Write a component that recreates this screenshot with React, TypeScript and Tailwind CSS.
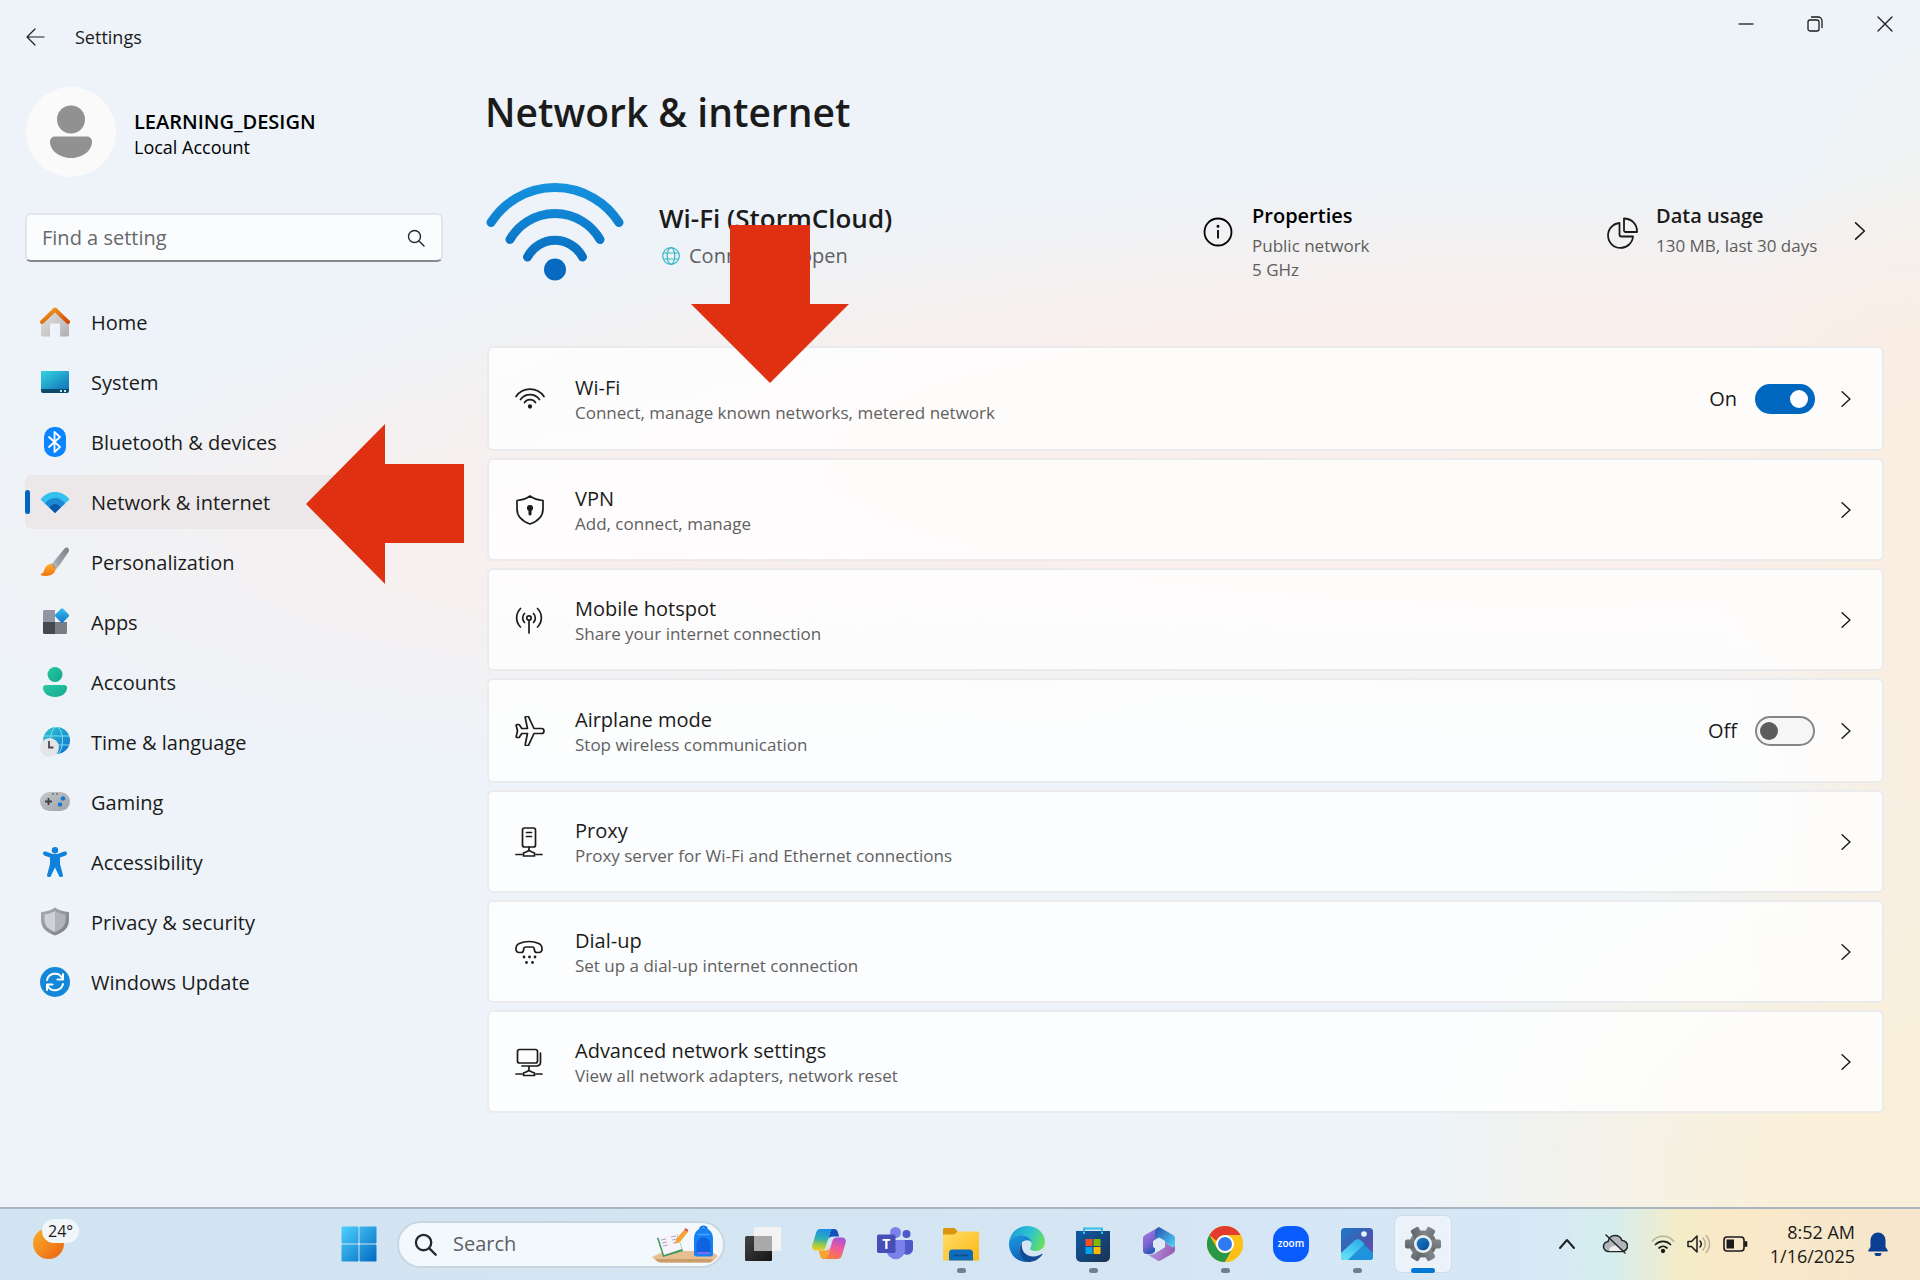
import React, { useState } from "react";

type NavItem = {
  title: string;
  icon: React.ReactNode;
};

type SettingCard = {
  title: string;
  description: string;
  icon: React.ReactNode;
  toggle?: boolean;
};

type TaskbarApp = {
  title: string;
  icon: React.ReactNode;
  running?: boolean;
  active?: boolean;
};

/* ---------- Sidebar icons ---------- */

const HomeIcon = () => (
  <svg width="30" height="30" viewBox="0 0 30 30">
    <defs>
      <linearGradient id="homeWall" x1="0" y1="0" x2="1" y2="1">
        <stop offset="0" stopColor="#e6e6e6" />
        <stop offset="1" stopColor="#b0b0b2" />
      </linearGradient>
      <linearGradient id="homeRoof" x1="0" y1="0" x2="1" y2="1">
        <stop offset="0" stopColor="#f5a01d" />
        <stop offset="1" stopColor="#d04a08" />
      </linearGradient>
    </defs>
    <path d="M1 14 15 2l14 12v14a1.500 1.500 0 0 1-1.500 1.500H20V16.500h-10v13H2.500A1.500 1.500 0 0 1 1 28z" fill="url(#homeWall)" />
    <path d="M2 15 15 2.500 28 15" fill="none" stroke="url(#homeRoof)" strokeWidth="4" strokeLinecap="round" strokeLinejoin="round" />
  </svg>
);

const SystemIcon = () => (
  <svg width="30" height="30" viewBox="0 0 30 30">
    <defs>
      <linearGradient id="sysScreen" x1="0" y1="0" x2="1" y2="1">
        <stop offset="0" stopColor="#34d5e2" />
        <stop offset="1" stopColor="#1173b8" />
      </linearGradient>
    </defs>
    <rect x="1" y="4" width="28" height="22" rx="2" fill="#0c4a6a" />
    <path d="M3 4h24a2 2 0 0 1 2 2v16H1V6a2 2 0 0 1 2-2z" fill="url(#sysScreen)" />
    <rect x="20" y="23" width="2" height="2" fill="#bfe6f5" />
    <rect x="24" y="23" width="2" height="2" fill="#bfe6f5" />
  </svg>
);

const BluetoothIcon = () => (
  <svg width="30" height="30" viewBox="0 0 30 30">
    <rect x="4" y="0" width="22" height="30" rx="10" fill="#0a84ff" />
    <path d="m9 10 11 10-5.500 5V5l5.500 5L9 20" fill="none" stroke="#fff" strokeWidth="1.800" strokeLinejoin="round" strokeLinecap="round" />
  </svg>
);

const NetworkIcon = () => (
  <svg width="30" height="30" viewBox="0 0 30 30">
    <path d="M.500 12.500C4 7.500 9.500 5 15 5s11 2.500 14.500 7.500L15 26z" fill="#35c1ef" />
    <path d="M5 16.500C7.500 13 11 11 15 11s7.500 2 10 5.500L15 26z" fill="#1a8ad6" />
    <path d="M9.500 20.500C11 18.500 12.800 17 15 17s4 1.500 5.500 3.500L15 26z" fill="#0b57a6" />
  </svg>
);

const PersonalizationIcon = () => (
  <svg width="30" height="30" viewBox="0 0 30 30">
    <defs>
      <linearGradient id="brushHandle" x1="1" y1="0" x2="0" y2="1">
        <stop offset="0" stopColor="#7c8187" />
        <stop offset="1" stopColor="#a9b0b6" />
      </linearGradient>
      <linearGradient id="brushTip" x1="0" y1="0" x2="0" y2="1">
        <stop offset="0" stopColor="#ffb03a" />
        <stop offset="1" stopColor="#f07407" />
      </linearGradient>
    </defs>
    <path d="M24.500 1.500c3-2.500 5.500 0 4 3.500L18.500 19.500l-5-4.500z" fill="url(#brushHandle)" />
    <path d="M8.500 17.500c3-2 7 .500 7 4.500 0 5-6 8-14 6.500-1.500-.500-.500-1.800.800-2.200C4.500 25 4 19.500 8.500 17.500z" fill="url(#brushTip)" />
    <path d="m11.500 17 2-2 5 4.500-2.800 3z" fill="#6f757b" opacity=".5" />
  </svg>
);

const AppsIcon = () => (
  <svg width="30" height="30" viewBox="0 0 30 30">
    <defs>
      <linearGradient id="appDiamond" x1="0" y1="0" x2="1" y2="1">
        <stop offset="0" stopColor="#35c3f3" />
        <stop offset="1" stopColor="#1273c9" />
      </linearGradient>
    </defs>
    <path d="M4.500 3H15v12H3V4.500A1.500 1.500 0 0 1 4.500 3z" fill="#9095a1" />
    <path d="M3 15h12v12H4.500A1.500 1.500 0 0 1 3 25.500z" fill="#45494e" />
    <path d="M15 15h12v10.500a1.500 1.500 0 0 1-1.500 1.500H15z" fill="#797e83" />
    <rect x="16.500" y="3" width="11" height="11" rx="1.500" transform="rotate(45 22 8.500)" fill="url(#appDiamond)" />
  </svg>
);

const AccountsIcon = () => (
  <svg width="30" height="30" viewBox="0 0 30 30">
    <defs>
      <linearGradient id="accountFill" x1="0" y1="0" x2="1" y2="1">
        <stop offset="0" stopColor="#26c9a4" />
        <stop offset="1" stopColor="#14a78c" />
      </linearGradient>
    </defs>
    <circle cx="15" cy="7.500" r="7.500" fill="url(#accountFill)" />
    <path d="M6 18h18a3 3 0 0 1 3 3c0 5-5.500 9-12 9S3 26 3 21a3 3 0 0 1 3-3z" fill="url(#accountFill)" />
  </svg>
);

const TimeIcon = () => (
  <svg width="30" height="30" viewBox="0 0 30 30">
    <defs>
      <linearGradient id="globeFill" x1="0" y1="0" x2="1" y2="1">
        <stop offset="0" stopColor="#2ec8d0" />
        <stop offset="1" stopColor="#0f6fd0" />
      </linearGradient>
    </defs>
    <circle cx="16.500" cy="13.500" r="13.500" fill="url(#globeFill)" />
    <g fill="none" stroke="#7fdcf0" strokeWidth="1">
      <ellipse cx="16.500" cy="13.500" rx="6" ry="13.500" />
      <path d="M4 9h25M4 18h25" />
    </g>
    <circle cx="9.500" cy="20.500" r="9.500" fill="#e4e5e8" />
    <path d="M9 14v6.500h4.500" fill="none" stroke="#4b4b4b" strokeWidth="1.800" />
  </svg>
);

const GamingIcon = () => (
  <svg width="30" height="30" viewBox="0 0 30 30">
    <defs>
      <linearGradient id="padFill" x1="0" y1="0" x2="1" y2="1">
        <stop offset="0" stopColor="#c3c6ca" />
        <stop offset="1" stopColor="#a0a4a9" />
      </linearGradient>
    </defs>
    <rect x="0" y="5" width="30" height="19" rx="9.500" fill="url(#padFill)" />
    <path d="M8.500 11v7M5 14.500h7" stroke="#3c3f43" strokeWidth="1.800" />
    <circle cx="23" cy="11.500" r="2.300" fill="#1b78cf" />
    <circle cx="20" cy="17.500" r="2.300" fill="#1b78cf" />
    <circle cx="13" cy="7" r=".8" fill="#3c3f43" />
    <circle cx="17" cy="7" r=".8" fill="#3c3f43" />
  </svg>
);

const AccessibilityIcon = () => (
  <svg width="30" height="30" viewBox="0 0 30 30">
    <circle cx="15" cy="3.200" r="3.200" fill="#0f83dc" />
    <path d="M5 6.500 12 9h6l7-2.500" fill="none" stroke="#0f83dc" strokeWidth="4" strokeLinecap="round" strokeLinejoin="round" />
    <path d="M10 8h10v9l2.800 10.500a2 2 0 0 1-3.800 1.300L15 20.500l-4 8.300a2 2 0 0 1-3.800-1.300L10 17z" fill="#0f83dc" />
  </svg>
);

const PrivacyIcon = () => (
  <svg width="30" height="30" viewBox="0 0 30 30">
    <defs>
      <linearGradient id="shieldEdge" x1="0" y1="0" x2="1" y2="1">
        <stop offset="0" stopColor="#a9acb0" />
        <stop offset="1" stopColor="#7b7e83" />
      </linearGradient>
    </defs>
    <path d="M15 .500C18.500 3 23 4.500 29 5v8c0 7.500-5 12.500-14 15.500C6 25.500 1 20.500 1 13V5c6-.500 10.500-2 14-4.500z" fill="url(#shieldEdge)" />
    <path d="M15 4c-3 2-6.500 3-10.500 3.500V13c0 5.500 3.500 9.500 10.500 12z" fill="#ced1d5" />
    <path d="M15 4c3 2 6.500 3 10.500 3.500V13c0 5.500-3.500 9.500-10.500 12z" fill="#b1b4b9" />
  </svg>
);

const UpdateIcon = () => (
  <svg width="30" height="30" viewBox="0 0 30 30">
    <circle cx="15" cy="15" r="15" fill="#1488d8" />
    <g fill="none" stroke="#fff" strokeWidth="2" strokeLinecap="round" strokeLinejoin="round">
      <path d="M7 13a8.300 8.300 0 0 1 15-2.500l1 1.500M23 7v5.500h-5.500" />
      <path d="M23 17a8.300 8.300 0 0 1-15 2.500L7 18M7 23v-5.500h5.500" />
    </g>
  </svg>
);

/* ---------- Card icons ---------- */

const lineProps = {
  width: 30,
  height: 30,
  viewBox: "0 0 30 30",
  fill: "none",
  stroke: "#1b1b1b",
  strokeWidth: 1.7,
  strokeLinecap: "round" as const,
  strokeLinejoin: "round" as const,
};

const WifiIcon = () => (
  <svg {...lineProps}>
    <path d="M1 12.500a17 17 0 0 1 28 0" />
    <path d="M5.500 15.500a11.700 11.700 0 0 1 19 0" />
    <path d="M9.500 18.500a6.800 6.800 0 0 1 11 0" />
    <circle cx="15" cy="22.500" r="1.300" fill="#1b1b1b" />
  </svg>
);

const VpnIcon = () => (
  <svg {...lineProps}>
    <path d="M15 1c3.500 2.500 7.500 4 13 4.500V14c0 7.500-4.500 12-13 15C6.500 26 2 21.500 2 14V5.500C7.500 5 11.500 3.500 15 1z" />
    <circle cx="15" cy="13" r="2.200" fill="#1b1b1b" />
    <path d="M15 14v5" strokeWidth="3" />
  </svg>
);

const HotspotIcon = () => (
  <svg {...lineProps}>
    <circle cx="14" cy="13" r="2.200" />
    <path d="M14 15.500V28" />
    <path d="M9.500 17.500a6.500 6.500 0 0 1 0-9M18.500 8.500a6.500 6.500 0 0 1 0 9" />
    <path d="M5.500 22a13 13 0 0 1 0-18.500M22.500 3.500a13 13 0 0 1 0 18.500" />
  </svg>
);

const AirplaneIcon = () => (
  <svg {...lineProps}>
    <path d="M26.500 12.500a2.500 2.500 0 0 1 0 5H19l-5.200 11.200a1 1 0 0 1-1 .800H11a.800.800 0 0 1-.800-1L12.500 17.500H6.800L4.500 21a1 1 0 0 1-.8.500H2a.800.800 0 0 1-.8-1L2.500 15 1.200 9.500a.800.800 0 0 1 .8-1h1.700a1 1 0 0 1 .8.500l2.300 3.500h5.700L10.200 1.500a.800.800 0 0 1 .8-1h1.800a1 1 0 0 1 1 .8L19 12.500z" />
  </svg>
);

const ProxyIcon = () => (
  <svg {...lineProps}>
    <rect x="7.500" y="1" width="13" height="19" rx="2" />
    <path d="M11.500 5.500h5M11.500 9.500h5M14 20v3.500M1 27.500h6M21 27.500h6" />
    <path d="M11 25l3-1.500 3 1.500 2.500 1v3h-11v-3z" />
  </svg>
);

const DialupIcon = () => (
  <svg {...lineProps}>
    <path d="M1 11c0-4 6-6.500 13-6.500S27 7 27 11v1.500a3 3 0 0 1-3 3h-2a2.500 2.500 0 0 1-2.500-2.200l-.3-1.800a2 2 0 0 0-2-1.500h-6.400a2 2 0 0 0-2 1.500l-.3 1.800A2.500 2.500 0 0 1 6 15.500H4a3 3 0 0 1-3-3z" />
    <g fill="#1b1b1b" stroke="none">
      <circle cx="9" cy="20" r="1.400" />
      <circle cx="14.500" cy="20" r="1.400" />
      <circle cx="20" cy="20" r="1.400" />
      <circle cx="11.500" cy="25.500" r="1.400" />
      <circle cx="17.500" cy="25.500" r="1.400" />
    </g>
  </svg>
);

const AdvancedIcon = () => (
  <svg {...lineProps}>
    <rect x="2.500" y="2.500" width="20" height="13.500" rx="2" />
    <path d="M25.500 6v9.500a3.500 3.500 0 0 1-3.500 3.500H7M14 19v4.500M1 27h6M21 27h6" />
    <path d="M11 25l3-1.500 3 1.500 2.500 1v2.500h-11V26z" />
  </svg>
);

const Chevron = ({ size = 16 }: { size?: number }) => (
  <svg width={size} height={size} viewBox="0 0 16 16" fill="none" stroke="#1b1b1b" strokeWidth="1.300" strokeLinecap="round" strokeLinejoin="round">
    <path d="M4.500 1.500 11.500 8l-7 6.500" />
  </svg>
);

const SearchIcon = ({ size = 18, stroke = 1.4 }: { size?: number; stroke?: number }) => (
  <svg width={size} height={size} viewBox="0 0 18 18" fill="none" stroke="#23282c" strokeWidth={stroke} strokeLinecap="round">
    <circle cx="7.500" cy="7.500" r="6" />
    <path d="m12 12 5 5" />
  </svg>
);

/* ---------- Taskbar icons ---------- */

const StartIcon = () => (
  <svg width="36" height="36" viewBox="0 0 36 36">
    <defs>
      <linearGradient id="startFill" gradientUnits="userSpaceOnUse" x1="0" y1="0" x2="36" y2="36">
        <stop offset="0" stopColor="#4fd3fb" />
        <stop offset="1" stopColor="#0167c4" />
      </linearGradient>
    </defs>
    <g fill="url(#startFill)">
      <rect x=".5" y=".5" width="17" height="17" rx="1" />
      <rect x="18.500" y=".5" width="17" height="17" rx="1" />
      <rect x=".5" y="18.500" width="17" height="17" rx="1" />
      <rect x="18.500" y="18.500" width="17" height="17" rx="1" />
    </g>
  </svg>
);

const TaskViewIcon = () => (
  <svg width="36" height="36" viewBox="0 0 36 36">
    <defs>
      <linearGradient id="tvDark" x1="0" y1="0" x2="1" y2="1">
        <stop offset="0" stopColor="#454545" />
        <stop offset="1" stopColor="#141414" />
      </linearGradient>
    </defs>
    <rect x="9" y="1" width="27" height="24" rx="1.500" fill="#f3f3f3" />
    <rect x="0" y="10" width="27" height="25" rx="1.500" fill="url(#tvDark)" />
    <rect x="9" y="10" width="18" height="15" fill="#a9a9a9" />
  </svg>
);

const CopilotIcon = () => (
  <svg width="36" height="36" viewBox="0 0 36 36">
    <defs>
      <linearGradient id="copLeft" x1=".3" y1="0" x2=".2" y2="1">
        <stop offset="0" stopColor="#1a8fe6" />
        <stop offset=".45" stopColor="#2fb0b0" />
        <stop offset=".75" stopColor="#a8cc3a" />
        <stop offset="1" stopColor="#f7c928" />
      </linearGradient>
      <linearGradient id="copRight" x1=".7" y1="0" x2=".4" y2="1">
        <stop offset="0" stopColor="#a553d8" />
        <stop offset=".5" stopColor="#ef5a9a" />
        <stop offset="1" stopColor="#fb7a3c" />
      </linearGradient>
    </defs>
    <path d="M20 3h3.500c1.600 0 2.600 1 3.100 2.500l1.600 5H22c-3 0-4.500 1.500-5.300 4z" fill="#1650c0" />
    <path d="M16 33h-3.500c-1.600 0-2.600-1-3.100-2.500l-1.800-6H14c3 0 4.500-1.500 5.300-4z" fill="#f8a12c" />
    <path d="M9.500 3H22c-1.800.500-2.600 2-3.200 4l-4 13.500c-.8 2.700-2 4-4.800 4H5c-3 0-4.500-2.500-3.600-5.500l3.600-12C5.800 4.500 7.200 3 9.500 3z" fill="url(#copLeft)" />
    <path d="M26.500 33H14c1.800-.500 2.600-2 3.200-4l4-13.500c.8-2.700 2-4 4.800-4h5c3 0 4.500 2.500 3.600 5.500l-3.600 12c-.8 2.500-2.200 4-4.500 4z" fill="url(#copRight)" />
  </svg>
);

const TeamsIcon = () => (
  <svg width="36" height="36" viewBox="0 0 36 36">
    <circle cx="29.500" cy="8" r="4" fill="#5059c9" />
    <path d="M25 14h9.500a1.500 1.500 0 0 1 1.500 1.500V23a6 6 0 0 1-11 3z" fill="#5059c9" />
    <circle cx="18.500" cy="6.500" r="5.500" fill="#7b83eb" />
    <path d="M11 14h15.500a1.500 1.500 0 0 1 1.500 1.500V24a9.200 9.200 0 0 1-18.400 0z" fill="#7b83eb" />
    <rect x="0" y="8.500" width="18.500" height="18.500" rx="1.700" fill="#464eb8" />
    <text x="9.200" y="23" textAnchor="middle" fontSize="14" fontWeight="700" fill="#fff" fontFamily="Open Sans, sans-serif">T</text>
  </svg>
);

const ExplorerIcon = () => (
  <svg width="36" height="36" viewBox="0 0 36 36">
    <defs>
      <linearGradient id="folderFill" x1="0" y1="0" x2="1" y2="1">
        <stop offset="0" stopColor="#ffdc6a" />
        <stop offset="1" stopColor="#fdb913" />
      </linearGradient>
    </defs>
    <path d="M1.500 2H10c1.500 0 2 .500 3 1.500L14.500 5v6H0V3.500A1.500 1.500 0 0 1 1.500 2z" fill="#d9960a" />
    <path d="M0 8.500h10c1.500 0 2-.500 3-1.500l1.500-1.500h20A1.500 1.500 0 0 1 36 7v27.500H0z" fill="url(#folderFill)" />
    <path d="M6 34.500V27a3.500 3.500 0 0 1 3.500-3.500h17A3.500 3.500 0 0 1 30 27v7.500z" fill="#0f6cbd" />
    <path d="M11.500 29.500h13" stroke="#0b4a8a" strokeWidth="1.600" strokeLinecap="round" />
  </svg>
);

const EdgeIcon = () => (
  <svg width="36" height="36" viewBox="0 0 36 36">
    <defs>
      <linearGradient id="edgeTop" x1="0" y1=".3" x2="1" y2=".6">
        <stop offset="0" stopColor="#1e9fd8" />
        <stop offset=".55" stopColor="#2cc4cf" />
        <stop offset="1" stopColor="#6be05a" />
      </linearGradient>
      <linearGradient id="edgeLeft" x1="0" y1="0" x2=".4" y2="1">
        <stop offset="0" stopColor="#1c9de0" />
        <stop offset="1" stopColor="#0f60b8" />
      </linearGradient>
    </defs>
    <path d="M0 17C1 7 8.500 0 18 0c10.500 0 18 7.500 18 16 0 5.500-4 9-9 9-3.500 0-6-1.200-6-2.500 0-1 1.500-1.800 1.500-4.500 0-4.500-4-9-10.500-9C6 9 1.500 12.500 0 17z" fill="url(#edgeTop)" />
    <path d="M0 18C0 12.500 5.500 9 12 9c6 0 10 3.800 10.500 7.500-1-1.500-2.600-2.300-4.500-2.300-4.500 0-7.500 4-7.500 8.600 0 6 4.200 11 9.500 13C8.500 37 0 28.500 0 18z" fill="url(#edgeLeft)" />
    <path d="M13 16.500c-1.600 8.500 4 14 11.500 14 4 0 6.500-1.500 8.300-2.700.500-.300 1 .200.600.700C30 33.500 24.500 36 19.500 36c-6-1.500-9-7.500-9-12.500 0-3 1-5.500 2.500-7z" fill="#134c95" />
  </svg>
);

const StoreIcon = () => (
  <svg width="36" height="36" viewBox="0 0 36 36">
    <defs>
      <linearGradient id="storeFill" x1="0" y1="0" x2="1" y2="1">
        <stop offset="0" stopColor="#0c5aa6" />
        <stop offset="1" stopColor="#1c3252" />
      </linearGradient>
    </defs>
    <path d="M9 10V2.500h18V10" fill="none" stroke="#35bfe6" strokeWidth="2" />
    <path d="M1 5h34v26a5 5 0 0 1-5 5H6a5 5 0 0 1-5-5z" fill="url(#storeFill)" />
    <path d="M9 8V5.500M27 8V5.500" stroke="#35bfe6" strokeWidth="2" />
    <rect x="10.500" y="13" width="7" height="7" fill="#f25022" />
    <rect x="18.500" y="13" width="7" height="7" fill="#7fba00" />
    <rect x="10.500" y="21" width="7" height="7" fill="#00a4ef" />
    <rect x="18.500" y="21" width="7" height="7" fill="#ffb900" />
  </svg>
);

const OfficeIcon = () => (
  <svg width="36" height="36" viewBox="0 0 36 36">
    <defs>
      <linearGradient id="offLeft" x1="0" y1="0" x2=".5" y2="1">
        <stop offset="0" stopColor="#a883ea" />
        <stop offset=".6" stopColor="#7f63cf" />
        <stop offset="1" stopColor="#1f57b8" />
      </linearGradient>
      <linearGradient id="offRight" x1="0" y1="0" x2="1" y2="1">
        <stop offset="0" stopColor="#2450a8" />
        <stop offset=".6" stopColor="#3f9fe0" />
        <stop offset="1" stopColor="#55d3f5" />
      </linearGradient>
      <linearGradient id="offBottom" x1="0" y1="0" x2="1" y2=".2">
        <stop offset="0" stopColor="#b8a0ea" />
        <stop offset="1" stopColor="#9a5fb4" />
      </linearGradient>
    </defs>
    <path d="M18 1 4 9c-1.500 1-2 2-2 3.500v12c0 2.500 1.500 3.500 4 3.500 4.500 0 7.500-.500 8-3.500V9z" fill="url(#offLeft)" />
    <path d="M18 1c-2.500 1.300-4 3-4 6v8.500l4-2.500 6 3.500 6 4c2 1.200 4 .5 4-1.500v-6.500c0-1.500-.6-2.600-2-3.500z" fill="url(#offRight)" />
    <path d="M34 19c0 2-2 2.800-4 1.500l-6-4V21l-10 6.500c-2 1.200-5 1.500-8.500.5L16 34.300c1.300.8 2.700.8 4 0l12-7c1.300-.8 2-2 2-3.500z" fill="url(#offBottom)" />
    <path d="m18 12 5.500 3v6L18 24l-5.500-3v-6z" fill="#dcebf6" stroke="#dcebf6" strokeWidth="1" strokeLinejoin="round" />
  </svg>
);

const ChromeIcon = () => (
  <svg width="36" height="36" viewBox="0 0 36 36">
    <circle cx="18" cy="18" r="18" fill="#fbc116" />
    <path d="M2.400 9A18 18 0 0 1 33.600 9H18a9 9 0 0 0-8.500 6z" fill="#e33b2e" />
    <path d="M2.400 9a18 18 0 0 0 15.600 27l7.800-13.500a9 9 0 0 1-15.600 0z" fill="#289847" />
    <path d="M33.600 9H18a9 9 0 0 1 7.800 13.500L18 36A18 18 0 0 0 33.600 9z" fill="#fbc116" />
    <circle cx="18" cy="18" r="9" fill="#fff" />
    <circle cx="18" cy="18" r="7" fill="#3079ee" />
  </svg>
);

const ZoomIcon = () => (
  <svg width="36" height="36" viewBox="0 0 36 36">
    <rect width="36" height="36" rx="14" fill="#0b5cff" />
    <text x="18" y="21" textAnchor="middle" fontSize="10" fontWeight="600" fill="#fff" fontFamily="Open Sans, sans-serif">zoom</text>
  </svg>
);

const PhotosIcon = () => (
  <svg width="36" height="36" viewBox="0 0 36 36">
    <defs>
      <linearGradient id="photoBg" x1="0" y1="0" x2="1" y2="1">
        <stop offset="0" stopColor="#1a7bc8" />
        <stop offset=".6" stopColor="#4a55ad" />
        <stop offset="1" stopColor="#6f4bb0" />
      </linearGradient>
      <linearGradient id="photoHill" x1="0" y1="1" x2=".6" y2="0">
        <stop offset="0" stopColor="#6be6f7" />
        <stop offset="1" stopColor="#2eb2ea" />
      </linearGradient>
      <clipPath id="photoClip">
        <rect x="2" y="2" width="32" height="32" rx="3.500" />
      </clipPath>
    </defs>
    <g clipPath="url(#photoClip)">
      <rect x="2" y="2" width="32" height="32" fill="url(#photoBg)" />
      <path d="M16 14.500c1.500-1.300 3.500-1.300 5 0L34 27v7H8z" fill="#1f93dc" />
      <path d="M15.500 14.500c2-1.800 4.500-1.800 6.500 0l3.500 3.300L9 34H2v-7z" fill="url(#photoHill)" />
    </g>
    <circle cx="25" cy="8" r="2.800" fill="#e8f2fb" />
  </svg>
);

const SettingsIcon = () => (
  <svg width="36" height="36" viewBox="0 0 36 36">
    <defs>
      <linearGradient id="gearFill" x1="0" y1="0" x2="1" y2="1">
        <stop offset="0" stopColor="#868b90" />
        <stop offset="1" stopColor="#5f6468" />
      </linearGradient>
      <linearGradient id="gearHole" x1="0" y1="0" x2="1" y2="1">
        <stop offset="0" stopColor="#1a7fd0" />
        <stop offset="1" stopColor="#0b4a8f" />
      </linearGradient>
    </defs>
    <g fill="url(#gearFill)">
      <circle cx="18" cy="18" r="13.500" />
      <rect x="13.500" y="0" width="9" height="36" rx="2" transform="rotate(30 18 18)" />
      <rect x="13.500" y="0" width="9" height="36" rx="2" transform="rotate(90 18 18)" />
      <rect x="13.500" y="0" width="9" height="36" rx="2" transform="rotate(150 18 18)" />
    </g>
    <circle cx="18" cy="18" r="9" fill="#e9eef3" />
    <circle cx="18" cy="18" r="6.300" fill="url(#gearHole)" />
  </svg>
);

/* ---------- Data ---------- */

const NAV_ITEMS: NavItem[] = [
  { title: "Home", icon: <HomeIcon /> },
  { title: "System", icon: <SystemIcon /> },
  { title: "Bluetooth & devices", icon: <BluetoothIcon /> },
  { title: "Network & internet", icon: <NetworkIcon /> },
  { title: "Personalization", icon: <PersonalizationIcon /> },
  { title: "Apps", icon: <AppsIcon /> },
  { title: "Accounts", icon: <AccountsIcon /> },
  { title: "Time & language", icon: <TimeIcon /> },
  { title: "Gaming", icon: <GamingIcon /> },
  { title: "Accessibility", icon: <AccessibilityIcon /> },
  { title: "Privacy & security", icon: <PrivacyIcon /> },
  { title: "Windows Update", icon: <UpdateIcon /> },
];

const CARDS: SettingCard[] = [
  { title: "Wi-Fi", description: "Connect, manage known networks, metered network", icon: <WifiIcon />, toggle: true },
  { title: "VPN", description: "Add, connect, manage", icon: <VpnIcon /> },
  { title: "Mobile hotspot", description: "Share your internet connection", icon: <HotspotIcon /> },
  { title: "Airplane mode", description: "Stop wireless communication", icon: <AirplaneIcon />, toggle: false },
  { title: "Proxy", description: "Proxy server for Wi-Fi and Ethernet connections", icon: <ProxyIcon /> },
  { title: "Dial-up", description: "Set up a dial-up internet connection", icon: <DialupIcon /> },
  { title: "Advanced network settings", description: "View all network adapters, network reset", icon: <AdvancedIcon /> },
];

const APPS: TaskbarApp[] = [
  { title: "Task View", icon: <TaskViewIcon /> },
  { title: "Copilot", icon: <CopilotIcon /> },
  { title: "Teams", icon: <TeamsIcon /> },
  { title: "File Explorer", icon: <ExplorerIcon />, running: true },
  { title: "Edge", icon: <EdgeIcon /> },
  { title: "Store", icon: <StoreIcon />, running: true },
  { title: "Microsoft 365", icon: <OfficeIcon /> },
  { title: "Chrome", icon: <ChromeIcon />, running: true },
  { title: "Zoom", icon: <ZoomIcon /> },
  { title: "Photos", icon: <PhotosIcon />, running: true },
  { title: "Settings", icon: <SettingsIcon />, active: true },
];

/* ---------- Sections ---------- */

const TitleBar = () => (
  <header className="flex h-[74px] items-start justify-between">
    <div className="flex h-full items-center gap-[30px] pl-[26px]">
      <button aria-label="Back">
        <svg width="19" height="18" viewBox="0 0 19 18" fill="none" stroke="#1b1f24" strokeWidth="1.200" strokeLinecap="round" strokeLinejoin="round">
          <path d="M9 1 1 9l8 8M1 9h17" />
        </svg>
      </button>
      <span className="text-lg leading-6">Settings</span>
    </div>
    <div className="flex h-[47px] items-center">
      <button aria-label="Minimize" className="flex w-[69px] justify-center">
        <svg width="16" height="16" viewBox="0 0 16 16" stroke="#1b1b1b" strokeWidth="1.300">
          <path d="M.5 8h15" />
        </svg>
      </button>
      <button aria-label="Restore" className="flex w-[69px] justify-center">
        <svg width="16" height="16" viewBox="0 0 16 16" fill="none" stroke="#1b1b1b" strokeWidth="1.300" strokeLinecap="round">
          <rect x="1" y="4" width="11" height="11" rx="2" />
          <path d="M4.500 1H11a4 4 0 0 1 4 4v6.500" />
        </svg>
      </button>
      <button aria-label="Close" className="flex w-[71px] justify-center">
        <svg width="16" height="16" viewBox="0 0 16 16" stroke="#1b1b1b" strokeWidth="1.300" strokeLinecap="round">
          <path d="m1 1 14 14M15 1 1 15" />
        </svg>
      </button>
    </div>
  </header>
);

const Sidebar = () => (
  <aside className="w-[443px] shrink-0 pt-[13px] pl-[25px]">
    <div className="flex items-center gap-[18px] pl-px">
      <div className="size-[90px] rounded-full bg-[#fafafa]">
        <svg width="90" height="90" viewBox="0 0 90 90" fill="#919191">
          <circle cx="45" cy="32.500" r="14" />
          <path d="M29 49.500h32a5 5 0 0 1 5 5C66 64 56 71 45 71s-21-7-21-16.500a5 5 0 0 1 5-5z" />
        </svg>
      </div>
      <div className="pt-1 text-black">
        <div className="text-xl leading-[26px] font-semibold">LEARNING_DESIGN</div>
        <div className="text-lg leading-6">Local Account</div>
      </div>
    </div>

    <label className="mt-9 flex h-[49px] items-center rounded-md border-2 border-[#e2e5ea] border-b-[#85888c] bg-[#fbfcfe] pr-4 pl-[15px]">
      <input
        type="text"
        aria-label="Find a setting"
        placeholder="Find a setting"
        className="min-w-0 flex-1 bg-transparent text-xl outline-none placeholder:text-[#66686b]"
      />
      <SearchIcon />
    </label>

    <nav className="mt-[33px]">
      <ul className="flex flex-col gap-1.5">
        {NAV_ITEMS.map((item) => {
          const selected = item.title === "Network & internet";
          return (
            <li key={item.title} className="relative">
              <a
                href="#"
                className={`flex h-[54px] items-center rounded-md ${selected ? "bg-[#ece8ea]" : ""}`}
              >
                <span className={`h-6 w-[5px] rounded-full ${selected ? "bg-[#0067c0]" : ""}`} />
                <span className="ml-[10px]">{item.icon}</span>
                <span className="ml-[21px] pt-0.5 text-xl leading-7">{item.title}</span>
              </a>
              {selected && (
                <svg className="absolute -top-[51px] left-[281px]" width="158" height="160" viewBox="0 0 158 160">
                  <path d="M0 80 79 0v40h79v79H79v41z" fill="#e03012" />
                </svg>
              )}
            </li>
          );
        })}
      </ul>
    </nav>
  </aside>
);

const ConnectionSummary = () => (
  <section className="relative mt-9 flex h-28 items-start">
    <svg className="mt-[6px] -ml-px shrink-0" width="138" height="99" viewBox="0 0 138 99" fill="none">
      <defs>
        <linearGradient id="wifiFill" gradientUnits="userSpaceOnUse" x1="0" y1="0" x2="0" y2="99">
          <stop offset="0" stopColor="#1593e0" />
          <stop offset="1" stopColor="#0764b8" />
        </linearGradient>
      </defs>
      <g stroke="url(#wifiFill)" strokeWidth="9" strokeLinecap="round">
        <path d="M5 40.500a76 76 0 0 1 128 0" />
        <path d="M24 57.500a52 52 0 0 1 90 0" />
        <path d="M41.500 75a31 31 0 0 1 55 0" />
      </g>
      <circle cx="69" cy="87.500" r="11" fill="#076ac0" />
    </svg>
    <div className="ml-[35px] pt-[26px]">
      <h2 className="text-[26px] leading-8 font-semibold">Wi-Fi (StormCloud)</h2>
      <div className="mt-2 flex items-center gap-[9px] pl-[3px] text-xl leading-7 text-[#5d6064]">
        <svg width="18" height="18" viewBox="0 0 18 18" fill="none" stroke="#35b6c9" strokeWidth="1.200">
          <circle cx="9" cy="9" r="8.300" />
          <ellipse cx="9" cy="9" rx="3.800" ry="8.300" />
          <path d="M1.500 6h15M1.500 12h15" />
        </svg>
        <span>Connected, open</span>
      </div>
    </div>
    <div className="ml-auto flex w-[404px] shrink-0 pt-7">
      <svg className="mt-[13px]" width="30" height="30" viewBox="0 0 30 30" fill="none" stroke="#000" strokeWidth="1.800">
        <circle cx="15" cy="15" r="13.500" />
        <path d="M15 13v8.500" />
        <circle cx="15" cy="9.200" r=".6" />
      </svg>
      <div className="ml-[19px]">
        <h3 className="mb-1.5 text-xl leading-6 font-semibold text-black">Properties</h3>
        <p className="text-[17px] leading-6 text-[#5d5d5d]">Public network</p>
        <p className="text-[17px] leading-6 text-[#5d5d5d]">5 GHz</p>
      </div>
    </div>
    <a href="#" className="flex w-[277px] shrink-0 pt-7">
      <svg className="mt-[13px]" width="32" height="32" viewBox="0 0 32 32" fill="none" stroke="#1b1b1b" strokeWidth="1.800" strokeLinejoin="round">
        <path d="M12.500 6A12.500 12.500 0 1 0 26 19.500H14.500a2 2 0 0 1-2-2z" />
        <path d="M17 1.500v12a1.500 1.500 0 0 0 1.500 1.500H30C30.500 7.500 24.500 1.500 17 1.500z" />
      </svg>
      <div className="ml-[17px] whitespace-nowrap">
        <h3 className="mb-1.5 text-xl leading-6 font-semibold">Data usage</h3>
        <p className="text-[17px] leading-6 text-[#5d5d5d]">130 MB, last 30 days</p>
      </div>
      <span className="mt-[17px] mr-3.5 ml-auto">
        <Chevron size={20} />
      </span>
    </a>
    <svg className="absolute top-[49px] left-[204px]" width="158" height="158" viewBox="0 0 158 158">
      <path d="M39 0h80v79h39l-79 79L0 79h39z" fill="#e03012" />
    </svg>
  </section>
);

const Card = ({ card }: { card: SettingCard }) => {
  const [on, setOn] = useState(card.toggle ?? false);
  const hasToggle = card.toggle !== undefined;

  return (
    <li
      className={`flex items-center rounded-md border-2 border-[#e6e6e8]/80 bg-white/80 pr-[27px] pl-[26px] ${hasToggle ? "h-[105px]" : "h-[103px]"}`}
    >
      {card.icon}
      <div className="ml-[30px] pt-0.5">
        <h3 className="text-xl leading-[26px]">{card.title}</h3>
        <p className="text-[17px] leading-6 text-[#616161]">{card.description}</p>
      </div>
      <div className="ml-auto flex items-center">
        {hasToggle && (
          <label className="mr-[22px] flex items-center gap-[18px] text-xl leading-7">
            {on ? "On" : "Off"}
            <input
              type="checkbox"
              checked={on}
              onChange={(e) => setOn(e.target.checked)}
              className="flex h-[30px] w-[60px] appearance-none items-center rounded-full border-2 border-[#868686] bg-[#f6f6f7] px-[3px] before:size-[18px] before:rounded-full before:bg-[#5d5d5d] checked:justify-end checked:border-[#0067c0] checked:bg-[#0067c0] checked:px-[5px] checked:before:bg-white"
            />
          </label>
        )}
        <button aria-label={`Open ${card.title}`}>
          <Chevron size={18} />
        </button>
      </div>
    </li>
  );
};

const Taskbar = () => (
  <footer className="flex h-[73px] items-center border-t-2 border-[#a9b5bf] bg-[linear-gradient(90deg,#d1e4f1_0%,#d5e5f3_60%,#d6e8f6_80%,#d6eeee_84%,#f4ecc8_87.500%,#fae9c8_90%,#f5e6cd_100%)] pb-px">
    <button aria-label="Weather" className="relative mt-2.5 ml-[33px] h-[40px] w-[46px] self-start text-left">
      <span className="absolute bottom-0 left-0 size-[31px] rounded-full bg-linear-to-br from-[#f6b02a] to-[#ec5f12]" />
      <span className="absolute top-0 left-[9px] rounded-full bg-[#f1f6fb] px-1.5 text-base leading-6">24°</span>
    </button>

    <div className="ml-[252px] flex items-center gap-2.5">
      <button aria-label="Start" className="flex size-14 items-center justify-center">
        <StartIcon />
      </button>
      <label className="flex h-[47px] w-[328px] items-center rounded-full border-2 border-[#c8d6e2] bg-[#f3f8fc] pr-1 pl-[15px]">
        <SearchIcon size={23} stroke={1.8} />
        <input
          type="text"
          aria-label="Search"
          placeholder="Search"
          className="ml-4 min-w-0 flex-1 bg-transparent text-xl outline-none placeholder:text-[#5c6165]"
        />
        <svg width="68" height="38" viewBox="0 0 68 38">
          <path d="M1 32 14 26h46l7 5-5 5c-1 1-2 1.500-4 1.500H10c-2 0-4-1-5-2z" fill="#e5bf92" />
          <path d="M4 34h58l-2 2.500c-1 1-2 1-3 1H10c-2 0-4-1-6-3.500z" fill="#c99e6c" />
          <path d="m6 13 20-4 6 17-20 6z" fill="#3d9a5f" />
          <path d="m7 11 9-1 6 17-9 3zM16 10l9-3 6 17-9 3z" fill="#f6f4fa" />
          <path d="m10 15 5-1m-4 4 5-1m-4 4 5-1m3-8 5-1m-4 4 5-1m-4 4 5-1" stroke="#a9a4c4" strokeWidth="1" />
          <path d="m24 19 1-5 8-9 4 2-8 10z" fill="#f3a33a" />
          <path d="m33 5 1.500-2 3 2L36.500 7z" fill="#e2534a" />
          <path d="M49 4a3.700 3.700 0 0 1 7 0" fill="none" stroke="#1477e8" strokeWidth="2" />
          <path d="M43 14c0-7 4-11 9.500-11S62 7 62 14v15a2.500 2.500 0 0 1-2.500 2.500h-14A2.500 2.500 0 0 1 43 29z" fill="#1681f5" />
          <path d="M45.500 19.500a7 7 0 0 1 14 0V28h-14z" fill="#0f63e0" />
          <path d="M47 9.500h11" stroke="#4aa6ff" strokeWidth="1.500" strokeLinecap="round" />
          <path d="M46 28h13" stroke="#9a6cf0" strokeWidth="1.500" />
        </svg>
      </label>
      {APPS.map((app) => (
        <button
          key={app.title}
          aria-label={app.title}
          className={`relative flex size-14 items-center justify-center rounded-md ${app.active ? "bg-[#ebf2f9] shadow-[0_0_0_1px_#cfdde9]" : ""}`}
        >
          {app.icon}
          {app.running && <span className="absolute -bottom-px h-[5px] w-[9px] rounded-full bg-[#71808d]" />}
          {app.active && <span className="absolute -bottom-px h-[5px] w-6 rounded-full bg-[#0078d4]" />}
        </button>
      ))}
    </div>

    <div className="ml-auto flex items-center pr-8">
      <button aria-label="Show hidden icons">
        <svg width="18" height="12" viewBox="0 0 18 12" fill="none" stroke="#1e2326" strokeWidth="2" strokeLinecap="round" strokeLinejoin="round">
          <path d="m2 10 7-8 7 8" />
        </svg>
      </button>
      <svg className="ml-[26px]" width="26" height="22" viewBox="0 0 26 22" fill="#b3b6b9" stroke="#22262a" strokeWidth="1.500" strokeLinecap="round">
        <path d="M7 18.500a5 5 0 0 1-1-10C7 4.500 10 2.500 13 2.500c3.500 0 6 2 7 5a5.500 5.500 0 0 1 0 11z" />
        <path d="M7 18c0-3 3-6 8-5l6 5z" fill="#eceef0" stroke="none" />
        <path d="m4 2 19 18" />
      </svg>
      <button aria-label="Network, volume and battery" className="ml-[23px] flex items-center gap-3">
        <svg width="24" height="20" viewBox="0 0 24 20" fill="none" stroke="#1b1b1b" strokeWidth="1.700" strokeLinecap="round">
          <path d="M1.500 7a14 14 0 0 1 21 0" stroke="#b9b296" />
          <path d="M4.500 10.500a10.500 10.500 0 0 1 15 0" />
          <path d="M8 14a6 6 0 0 1 8 0" />
          <circle cx="12" cy="17" r="1.300" fill="#1b1b1b" />
        </svg>
        <svg width="24" height="20" viewBox="0 0 24 20" fill="none" stroke="#1b1b1b" strokeWidth="1.500" strokeLinecap="round" strokeLinejoin="round">
          <path d="M1 7.500v5h3.500L10 18V2L4.500 7.500z" />
          <path d="M13 7a4.500 4.500 0 0 1 0 6" />
          <path d="M16 4a9 9 0 0 1 0 12M19 1.500a12 12 0 0 1 0 17" stroke="#b9ae97" />
        </svg>
        <svg width="25" height="16" viewBox="0 0 25 16" fill="none" stroke="#1b1b1b" strokeWidth="1.600">
          <rect x="1" y="1" width="20" height="14" rx="3" />
          <rect x="3.500" y="3.500" width="7.500" height="9" fill="#1b1b1b" stroke="none" />
          <path d="M22 6v4h1.500V6z" fill="#1b1b1b" />
        </svg>
      </button>
      <div className="ml-[22px] text-right text-lg leading-6">
        <div>8:52 AM</div>
        <div>1/16/2025</div>
      </div>
      <button aria-label="Notifications" className="ml-[13px]">
        <svg width="20" height="24" viewBox="0 0 20 24" fill="#0a3f94">
          <path d="M10 .500a7.500 7.500 0 0 1 7.500 7.500v7l2.200 3.200c.4.700.1 1.300-.7 1.300H1c-.8 0-1.100-.6-.7-1.300L2.500 15V8A7.500 7.500 0 0 1 10 .500z" />
          <path d="M6.500 21h7a3.500 3.500 0 0 1-7 0z" />
        </svg>
      </button>
    </div>
  </footer>
);

const App: React.FC = () => {
  return (
    <div className="flex min-h-screen flex-col bg-[#edf3f8] font-['Open_Sans','Noto_Sans',sans-serif] text-[#1b1b1b]">
      <div className="flex-1 bg-[radial-gradient(ellipse_26%_32%_at_100%_98%,#faf0da_0%,#faf0da_30%,transparent_100%),radial-gradient(ellipse_12%_60%_at_101%_60%,#fbeedd_0%,transparent_100%),radial-gradient(ellipse_75%_24%_at_82%_38%,#faefe9_0%,#f9efec_50%,transparent_100%),radial-gradient(ellipse_40%_18%_at_32%_46%,#f9efee_0%,transparent_100%)]">
        <TitleBar />
        <div className="flex">
          <Sidebar />
          <main className="min-w-0 flex-1 pt-2.5 pr-9 pl-11">
            <h1 className="-ml-0.5 text-[39px] leading-[56px] font-semibold">Network & internet</h1>
            <ConnectionSummary />
            <ul className="mt-[58px] flex flex-col gap-[7px]">
              {CARDS.map((card) => (
                <Card key={card.title} card={card} />
              ))}
            </ul>
          </main>
        </div>
      </div>
      <Taskbar />
    </div>
  );
};

export default App;
